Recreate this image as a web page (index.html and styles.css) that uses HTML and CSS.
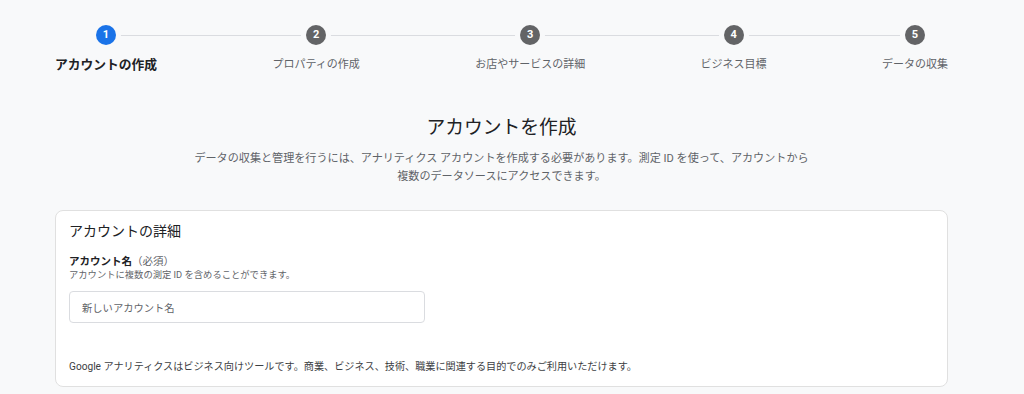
FILE: index.html
```html
<!DOCTYPE html>
<html lang="ja">
<head>
<meta charset="utf-8">
<link rel="stylesheet" href="styles.css">
</head>
<body>
<div class="page">
  <div class="stepper">
    <div class="stepper-line"></div>
    <div class="step active"><span class="dot">1</span><span class="step-label">アカウントの作成</span></div>
    <div class="step"><span class="dot">2</span><span class="step-label">プロパティの作成</span></div>
    <div class="step"><span class="dot">3</span><span class="step-label">お店やサービスの詳細</span></div>
    <div class="step"><span class="dot">4</span><span class="step-label">ビジネス目標</span></div>
    <div class="step"><span class="dot">5</span><span class="step-label">データの収集</span></div>
  </div>

  <div class="intro">
    <h1 class="title">アカウントを作成</h1>
    <p class="desc">データの収集と管理を行うには、アナリティクス アカウントを作成する必要があります。測定 ID を使って、アカウントから<br>複数のデータソースにアクセスできます。</p>
  </div>

  <div class="card">
    <h2 class="card-title">アカウントの詳細</h2>
    <div class="field-label">アカウント名<span class="req">（必須）</span></div>
    <div class="field-hint">アカウントに複数の測定 ID を含めることができます。</div>
    <div class="input"><span class="placeholder">新しいアカウント名</span></div>
    <p class="footnote">Google アナリティクスはビジネス向けツールです。商業、ビジネス、技術、職業に関連する目的でのみご利用いただけます。</p>
  </div>
</div>
</body>
</html>
```

FILE: styles.css
```css
* { box-sizing: border-box; }
html, body { margin: 0; padding: 0; }
body {
  background: #f8f9fa;
  font-family: Roboto, "Noto Sans CJK JP", sans-serif;
  color: #3c4043;
}
.page {
  width: 893px;
  margin: 0 0 0 55px;
}
.stepper {
  position: relative;
  display: flex;
  justify-content: space-between;
  padding-top: 25px;
}
.stepper-line {
  position: absolute;
  top: 35px;
  left: 52px;
  right: 33px;
  height: 1px;
  background: #dadce0;
}
.step {
  display: flex;
  flex-direction: column;
  align-items: center;
}
.dot {
  position: relative;
  width: 20px;
  height: 20px;
  border-radius: 50%;
  background: #636466;
  color: #fff;
  font-size: 11px;
  font-weight: 700;
  line-height: 20px;
  text-align: center;
  box-shadow: 0 0 0 5px #f8f9fa;
}
.step.active .dot { background: #1a73e8; }
.step-label {
  margin-top: 12px;
  font-size: 11px;
  line-height: 16px;
  color: #5f6368;
  white-space: nowrap;
}
.step.active .step-label {
  font-size: 12.75px;
  font-weight: 700;
  color: #202124;
}
.intro {
  text-align: center;
  margin-top: 41px;
}
.title {
  margin: 0;
  font-size: 18.75px;
  font-weight: 400;
  line-height: 28px;
  color: #202124;
}
.desc {
  margin: 8px 0 0;
  font-size: 11.1px;
  line-height: 18px;
  color: #5f6368;
}
.card {
  margin-top: 24px;
  background: #fff;
  border: 1px solid #e0e0e0;
  border-radius: 8px;
  padding: 10px 13px 12px;
}
.card-title {
  margin: 0;
  font-size: 14px;
  font-weight: 400;
  line-height: 20px;
  color: #202124;
}
.field-label {
  margin-top: 14px;
  font-size: 10.5px;
  font-weight: 700;
  line-height: 14px;
  color: #202124;
}
.req { font-weight: 400; color: #5f6368; }
.field-hint {
  font-size: 9.3px;
  line-height: 12px;
  color: #5f6368;
}
.input {
  margin-top: 10px;
  width: 356px;
  height: 32px;
  border: 1px solid #dadce0;
  border-radius: 4px;
  padding: 0 12px;
  display: flex;
  align-items: center;
}
.placeholder {
  font-size: 10.3px;
  color: #5f6368;
}
.footnote {
  margin: 37px 0 0;
  font-size: 10.15px;
  line-height: 14px;
  color: #3c4043;
}
```
